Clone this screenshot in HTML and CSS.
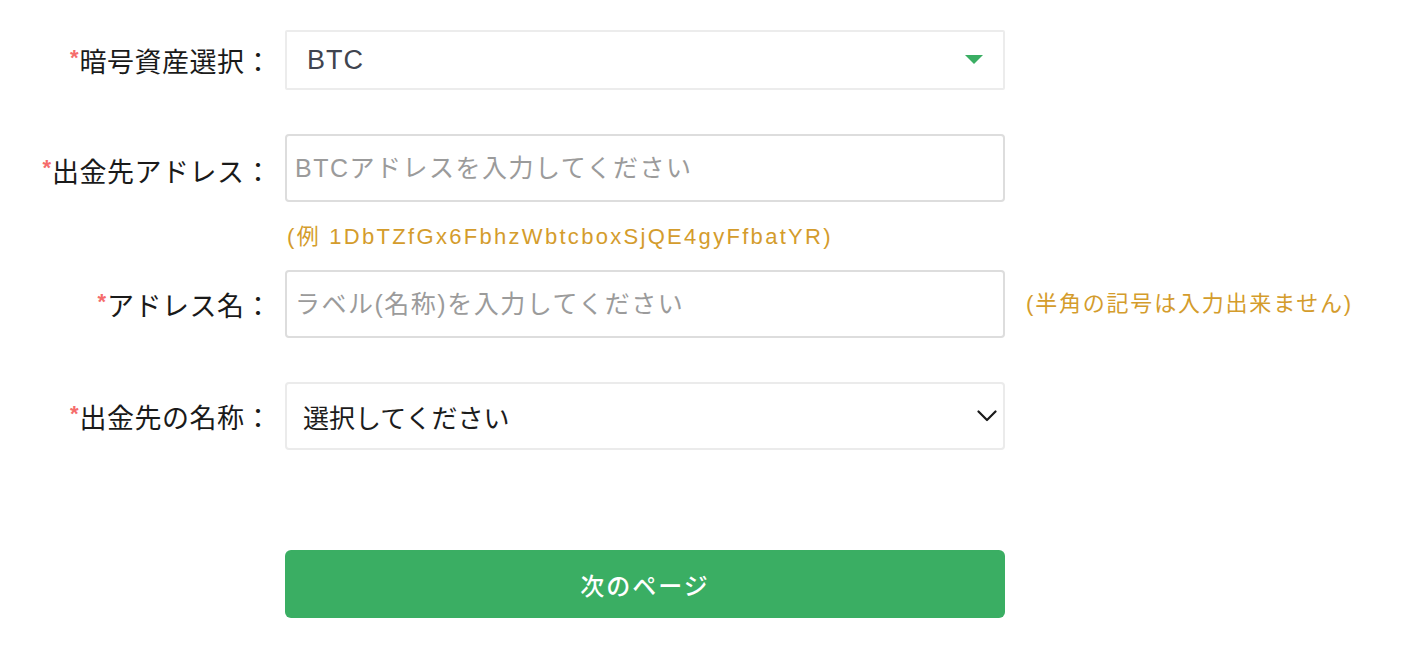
FILE: index.html
```html
<!DOCTYPE html>
<html lang="ja">
<head>
<meta charset="utf-8">
<title>出金先アドレス登録</title>
<link rel="stylesheet" href="styles.css">
</head>
<body>
<form class="form">
  <div class="row row-first">
    <label class="label"><span class="req">*</span>暗号資産選択：</label>
    <div class="control select-coin">
      <span class="coin-value">BTC</span>
      <svg class="caret" width="18" height="10" viewBox="0 0 18 10"><polygon points="0,0 18,0 9,9" fill="#3aae63"/></svg>
    </div>
  </div>

  <div class="row row-address">
    <label class="label label-tall"><span class="req">*</span>出金先アドレス：</label>
    <div class="field">
      <input class="control text-input" type="text" placeholder="BTCアドレスを入力してください">
      <div class="hint hint-below">(例 1DbTZfGx6FbhzWbtcboxSjQE4gyFfbatYR)</div>
    </div>
  </div>

  <div class="row">
    <label class="label"><span class="req">*</span>アドレス名：</label>
    <input class="control text-input" type="text" placeholder="ラベル(名称)を入力してください">
    <div class="hint hint-side">(半角の記号は入力出来ません)</div>
  </div>

  <div class="row row-last">
    <label class="label"><span class="req">*</span>出金先の名称：</label>
    <div class="control select-name">
      <span class="name-value">選択してください</span>
      <svg class="chevron" width="20" height="12" viewBox="0 0 20 12"><polyline points="1.5,1.5 10,10 18.5,1.5" fill="none" stroke="#1a1a1a" stroke-width="2.2" stroke-linecap="round" stroke-linejoin="round"/></svg>
    </div>
  </div>

  <div class="actions">
    <button type="button" class="btn-next">次のページ</button>
  </div>
</form>
</body>
</html>
```

FILE: styles.css
```css
html, body {
  margin: 0;
  padding: 0;
  background: #ffffff;
}

body {
  font-family: "Liberation Sans", "Noto Sans CJK JP", sans-serif;
  color: #1c1c1c;
}

.form {
  padding-top: 30px;
}

.row {
  display: flex;
  align-items: center;
  margin-bottom: 44px;
}

.row-address {
  align-items: flex-start;
  margin-bottom: 18px;
}

.row-last {
  margin-bottom: 0;
}

.label {
  flex: 0 0 272px;
  margin-right: 13px;
  text-align: right;
  font-family: "Noto Sans CJK JP", "Liberation Sans", sans-serif;
  font-size: 27px;
  letter-spacing: 0.5px;
  color: #1a1a1a;
  white-space: nowrap;
}

.label-tall {
  line-height: 68px;
}

.req {
  color: #f56c6c;
  font-family: "Liberation Sans", sans-serif;
  font-size: 22px;
  font-weight: bold;
  vertical-align: 7px;
  letter-spacing: 0;
  margin-right: 1px;
}

.control {
  box-sizing: border-box;
  width: 720px;
  flex-shrink: 0;
  height: 68px;
  border: 2px solid #dddddd;
  border-radius: 4px;
  background: #fff;
}

.select-coin {
  height: 60px;
  border-color: #ececec;
  border-radius: 2px;
  display: flex;
  align-items: center;
  justify-content: space-between;
  padding: 0 20px 0 20px;
}

.coin-value {
  font-size: 27px;
  color: #40444f;
  letter-spacing: 1px;
}

.caret {
  display: block;
}

.field {
  display: flex;
  flex-direction: column;
}

.text-input {
  padding: 0 8px;
  font-family: "Liberation Sans", "Noto Sans CJK JP", sans-serif;
  font-size: 25px;
  letter-spacing: 1.5px;
  color: #333;
  outline: none;
}

.text-input::placeholder {
  color: #9b9b9b;
}

.hint {
  color: #d49c2c;
  font-family: "Liberation Sans", "Noto Sans CJK JP", sans-serif;
  font-size: 22px;
  line-height: 30px;
  white-space: nowrap;
}

.hint-below {
  margin-top: 20px;
  padding-left: 2px;
  letter-spacing: 2.3px;
}

.hint-side {
  margin-left: 21px;
  letter-spacing: 1.8px;
}

.select-name {
  border-color: #ebebeb;
  display: flex;
  align-items: center;
  justify-content: space-between;
  padding: 0 6px 0 16px;
}

.name-value {
  font-family: "Noto Sans CJK JP", sans-serif;
  font-size: 26px;
  color: #1c1c1c;
}

.chevron {
  display: block;
}

.actions {
  padding-left: 285px;
  margin-top: 100px;
}

.btn-next {
  width: 720px;
  height: 68px;
  border: none;
  border-radius: 6px;
  background: #3aae63;
  color: #ffffff;
  font-family: "Noto Sans CJK JP", sans-serif;
  font-size: 24px;
  font-weight: 500;
  letter-spacing: 2px;
  cursor: pointer;
}
```
